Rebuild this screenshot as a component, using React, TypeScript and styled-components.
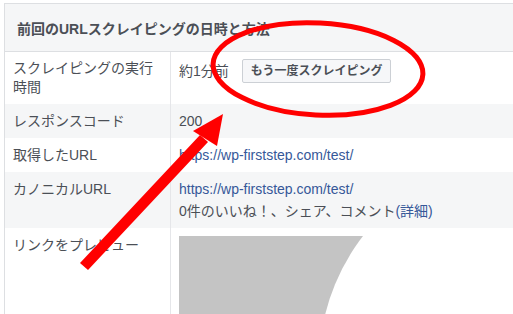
import styled, { createGlobalStyle } from 'styled-components'

const GlobalStyle = createGlobalStyle`
    html, body {
        margin: 0;
        padding: 0;
        background: #fff;
        overflow: hidden;
    }
    body {
        font-family: 'Liberation Sans', 'Noto Sans CJK JP', sans-serif;
        font-size: 14px;
        color: #4b4f56;
    }
`

const rows = [
    { label: ['スクレイピングの実行', '時間'], kind: 'time' },
    { label: ['レスポンスコード'], kind: 'code' },
    { label: ['取得したURL'], kind: 'url' },
    { label: ['カノニカルURL'], kind: 'canonical' },
    { label: ['リンクをプレビュー'], kind: 'preview' },
]

export default function App() {
    return (
        <Page>
            <GlobalStyle />
            <Panel>
                <Header>前回のURLスクレイピングの日時と方法</Header>
                {rows.map((row, i) => (
                    <Row key={row.kind} $alt={i % 2 === 1}>
                        <Label $tight={row.label.length > 1}>
                            {row.label.map((l) => (
                                <div key={l}>{l}</div>
                            ))}
                        </Label>
                        <Value>{renderValue(row.kind)}</Value>
                    </Row>
                ))}
            </Panel>
            <Overlay width='513' height='314' viewBox='0 0 513 314'>
                <ellipse
                    cx='318'
                    cy='69'
                    rx='105'
                    ry='46'
                    transform='rotate(3 318 69)'
                    fill='none'
                    stroke='#ff0000'
                    strokeWidth='5'
                />
                <polygon points='80,263 88,270 208,142 200,135' fill='#ff0000' />
                <polygon points='223,114 193,131 217,146' fill='#ff0000' />
            </Overlay>
        </Page>
    )
}

function renderValue(kind: string) {
    switch (kind) {
        case 'time':
            return (
                <TimeLine>
                    <span>約1分前</span>
                    <RescrapeButton>もう一度スクレイピング</RescrapeButton>
                </TimeLine>
            )
        case 'code':
            return <div>200</div>
        case 'url':
            return <Link>https://wp-firststep.com/test/</Link>
        case 'canonical':
            return (
                <>
                    <Link>https://wp-firststep.com/test/</Link>
                    <Stats>
                        0件のいいね！、シェア、コメント<Link>(詳細)</Link>
                    </Stats>
                </>
            )
        default:
            return (
                <Preview>
                    <svg width='400' height='120'>
                        <rect width='400' height='120' fill='#c4c4c4' />
                        <circle cx='351' cy='129' r='211' fill='#fff' />
                    </svg>
                </Preview>
            )
    }
}

const Page = styled.div`
    position: relative;
    width: 513px;
    height: 314px;
    overflow: hidden;
    padding-top: 3px;
    box-sizing: border-box;
`

const Panel = styled.div`
    margin-left: 4px;
    width: 560px;
    border: 1px solid #dddfe2;
    background: #fff;
`

const Header = styled.div`
    height: 47px;
    display: flex;
    align-items: center;
    padding-left: 12px;
    background: #f5f6f7;
    border-bottom: 1px solid #dddfe2;
    font-weight: bold;
    font-size: 14px;
    color: #4b4f56;
`

const Row = styled.div<{ $alt: boolean }>`
    display: grid;
    grid-template-columns: 166px 1fr;
    background: ${(p) => (p.$alt ? '#f5f6f7' : '#fff')};
`

const Label = styled.div<{ $tight: boolean }>`
    padding: 7px 8px;
    line-height: ${(p) => (p.$tight ? '19px' : '20px')};
    border-right: 1px solid #e5e6e9;
    color: #4b4f56;
`

const Value = styled.div`
    padding: 7px 8px;
    line-height: 20px;
    color: #4b4f56;
    min-width: 0;
`

const TimeLine = styled.div`
    display: flex;
    align-items: center;
    gap: 13px;
    height: 24px;
`

const RescrapeButton = styled.button`
    height: 24px;
    padding: 0 8px;
    font-family: inherit;
    font-size: 12px;
    font-weight: 600;
    color: #4b4f56;
    background: #f6f7f9;
    border: 1px solid #ccd0d5;
    border-radius: 2px;
    line-height: 22px;
`

const Link = styled.span`
    color: #365899;
`

const Stats = styled.div`
    margin-top: 2px;
`

const Preview = styled.div`
    margin-top: 1px;
    height: 120px;
    overflow: hidden;
    svg {
        display: block;
    }
`

const Overlay = styled.svg`
    position: absolute;
    left: 0;
    top: 0;
    pointer-events: none;
`
